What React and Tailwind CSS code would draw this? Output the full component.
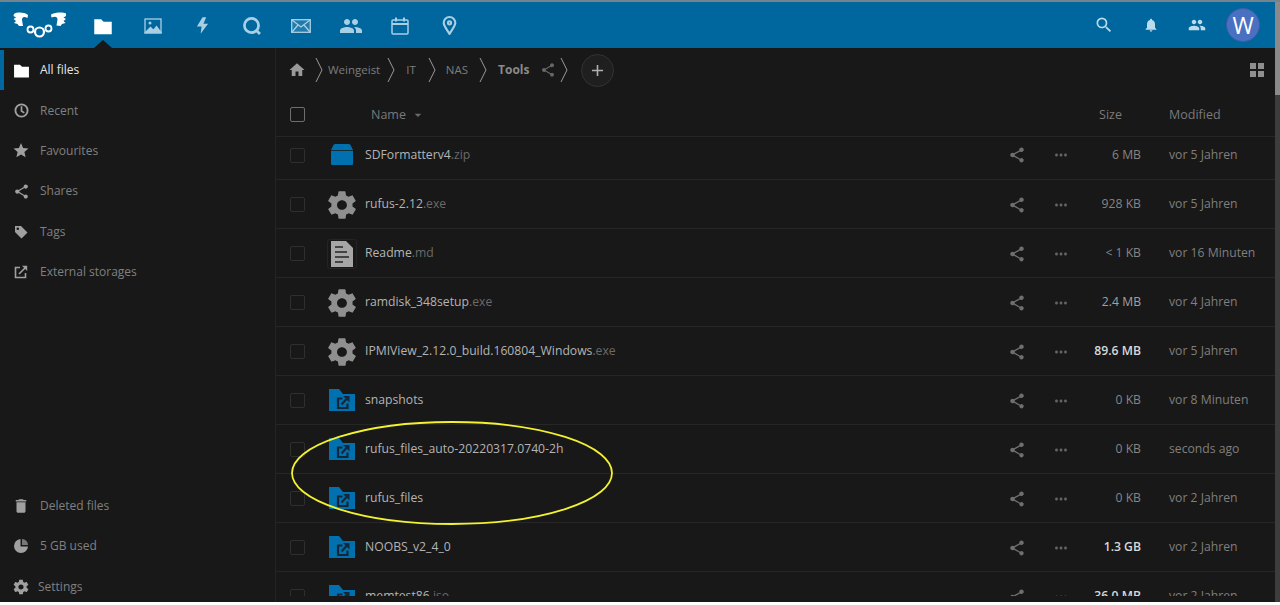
import React from "react";
import {
  MdHome,
  MdShare,
  MdMoreHoriz,
  MdStar,
  MdDelete,
  MdSearch,
  MdNotifications,
  MdAdd,
  MdArrowDropDown,
  MdPeople,
} from "react-icons/md";
import { IoMdSettings } from "react-icons/io";

const Folder = ({ className }) => (
  <svg viewBox="0 0 16 16" className={className} fill="currentColor">
    <path d="M1 2.500h5.500L8.500 4.500H15v10H1z" />
  </svg>
);

const SharedFolder = () => (
  <svg viewBox="0 0 28 28" className="w-[28px] h-[28px]">
    <path d="M1 2h10l4 5h12v17H1z" fill="#0071ae" />
    <path d="M14.500 11.500H10V21H19.500V16.500" fill="none" stroke="#12283a" strokeWidth="2.200" />
    <path d="M13.500 17.500L18.500 12" fill="none" stroke="#12283a" strokeWidth="2.200" />
    <path d="M15 9h6.500v6.500z" fill="#12283a" />
  </svg>
);

const Zip = () => (
  <svg viewBox="0 0 28 28" className="w-[28px] h-[28px]">
    <path d="M5.500 4Q6 3 7.500 3h13q1.500 0 2 1L25 9H3z" fill="#0071ae" />
    <path d="M3 9.800h22v13.200q0 1-1 1H4q-1 0-1-1z" fill="#0071ae" />
  </svg>
);

const Gear = () => <IoMdSettings className="w-[34px] h-[34px] text-[#8f8f8f] shrink-0" />;

const Doc = () => (
  <div className="w-[30px] h-[30px] rounded-[3px] border border-[#242424] flex items-center justify-center shrink-0">
    <svg viewBox="0 0 22 26" className="w-[22px] h-[26px]">
      <path d="M0 0h15l7 7v19H0z" fill="#a6a6a6" />
      <path d="M4 6h8M4 11h12M4 16h14M4 21h8" stroke="#242424" strokeWidth="1.700" />
    </svg>
  </div>
);

const files = [
  { name: "SDFormatterv4", ext: ".zip", icon: <Zip />, size: "6 MB", mod: "vor 5 Jahren", first: true },
  { name: "rufus-2.12", ext: ".exe", icon: <Gear />, size: "928 KB", mod: "vor 5 Jahren" },
  { name: "Readme", ext: ".md", icon: <Doc />, size: "< 1 KB", mod: "vor 16 Minuten" },
  { name: "ramdisk_348setup", ext: ".exe", icon: <Gear />, size: "2.4 MB", mod: "vor 4 Jahren", mid: true },
  { name: "IPMIView_2.12.0_build.160804_Windows", ext: ".exe", icon: <Gear />, size: "89.6 MB", mod: "vor 5 Jahren", big: true },
  { name: "snapshots", ext: "", icon: <SharedFolder />, size: "0 KB", mod: "vor 8 Minuten" },
  { name: "rufus_files_auto-20220317.0740-2h", ext: "", icon: <SharedFolder />, size: "0 KB", mod: "seconds ago" },
  { name: "rufus_files", ext: "", icon: <SharedFolder />, size: "0 KB", mod: "vor 2 Jahren" },
  { name: "NOOBS_v2_4_0", ext: "", icon: <SharedFolder />, size: "1.3 GB", mod: "vor 2 Jahren", big: true },
  { name: "memtest86", ext: ".iso", icon: <SharedFolder />, size: "36.0 MB", mod: "vor 2 Jahren", big: true },
];

const Row = ({ f }) => (
  <div
    className={`flex items-center shrink-0 border-b border-[#262626] pl-[14px] ${
      f.first ? "h-[43px] pb-[6px]" : "h-[49px] pt-[1px]"
    }`}
  >
    <div className="w-[15px] h-[15px] rounded-[2px] border border-[#2f2f2f] shrink-0" />
    <div className="w-[30px] h-[30px] ml-[22px] flex items-center justify-center shrink-0">{f.icon}</div>
    <div className="ml-[8px] flex-1 text-[12.200px] text-[#b4b4b4] whitespace-nowrap">
      {f.name}
      <span className="text-[#6a6a6a]">{f.ext}</span>
    </div>
    <MdShare className="w-[18px] h-[18px] text-[#6f6f6f] shrink-0" />
    <MdMoreHoriz className="w-[18px] h-[18px] ml-[26px] text-[#636363] shrink-0" />
    <div
      className={`w-[71px] text-right text-[12.200px] ${
        f.big ? "text-[#d8d8d8] font-semibold" : f.mid ? "text-[#a0a0a0]" : "text-[#858585]"
      }`}
    >
      {f.size}
    </div>
    <div className="w-[106px] ml-[28px] text-[12.200px] text-[#7f7f7f] whitespace-nowrap">{f.mod}</div>
  </div>
);

const Crumb = () => (
  <svg viewBox="0 0 8 26" className="w-[8px] h-[26px] shrink-0" fill="none" stroke="#9a9a9a" strokeWidth="1">
    <path d="M1 1l6 12-6 12" />
  </svg>
);

const NavItem = ({ icon, label, active, className }) => (
  <div
    className={`h-[40.400px] shrink-0 flex items-center text-[12px] ${
      active ? "border-l-[4px] border-[#0068a0] text-[#e6e6e6]" : "border-l-[4px] border-transparent text-[#808080]"
    } ${className || ""}`}
  >
    <div className={`w-[18px] h-[18px] ml-[8px] flex items-center justify-center ${active ? "text-white" : "text-[#a0a0a0]"}`}>
      {icon}
    </div>
    <span className="ml-[10px]">{label}</span>
  </div>
);

const TopIcon = ({ children, active }) => (
  <div className={`w-[49.500px] h-full pt-[1px] flex items-center justify-center ${active ? "text-white" : "text-[#a9cfe4]"}`}>
    {children}
  </div>
);

const Logo = () => (
  <svg viewBox="0 0 56 28" className="w-[56px] h-[28px] ml-[12px] shrink-0" fill="none" stroke="white">
    <circle cx="18.500" cy="18.500" r="3" strokeWidth="1.800" />
    <circle cx="27.500" cy="21" r="4.500" strokeWidth="2.200" />
    <circle cx="36.500" cy="17.500" r="3" strokeWidth="1.800" />
    <path
      d="M2 3C5 1 12 1 16 4L15.500 7C12 5 10 6 10 9L11 15L7 15L5.500 13L2 12L4 10L1.500 8L4 6.500L1.500 5z"
      fill="white"
      stroke="none"
    />
    <path
      d="M54 2.500C51 1 44 1 39 3.500L39.500 6.500C43 5 45.500 5.500 45.500 8.500L44.500 14.500L48.500 15L50 13L53.500 12L51.500 10L54 8L51.500 6.500L54 5z"
      fill="white"
      stroke="none"
    />
  </svg>
);

const App = () => {
  return (
    <div
      className="relative w-[1280px] h-[605px] bg-white overflow-hidden"
      style={{ fontFamily: '"Open Sans", "Noto Sans", sans-serif' }}
    >
      <div className="h-[2px] bg-[#75838d]" />
      <div className="flex flex-col h-[600px] w-[1275px] bg-[#181818]">
        <header className="relative h-[46px] bg-[#00679e] flex items-center shrink-0">
          <Logo />
          <div className="ml-[10.500px] flex h-full">
            <TopIcon active>
              <Folder className="w-[20px] h-[20px]" />
            </TopIcon>
            <TopIcon>
              <svg viewBox="0 0 18 18" className="w-[18px] h-[18px]" fill="none" stroke="currentColor" strokeWidth="1.300">
                <rect x="1" y="2" width="16" height="14" />
                <path d="M1.500 15.500l5-5 3 3 3-4 4.500 6z" fill="currentColor" />
                <circle cx="6" cy="6" r="1.500" fill="currentColor" stroke="none" />
              </svg>
            </TopIcon>
            <TopIcon>
              <svg viewBox="0 0 14 18" className="w-[13px] h-[17px]" fill="currentColor">
                <path d="M7 0L1 10h5l-1 8 8-11H8l3-7z" />
              </svg>
            </TopIcon>
            <TopIcon>
              <svg viewBox="0 0 18 18" className="w-[19px] h-[19px]" fill="none" stroke="currentColor" strokeWidth="2.600">
                <circle cx="9" cy="9" r="6.700" />
                <path d="M13 13l4 4" />
              </svg>
            </TopIcon>
            <TopIcon>
              <svg viewBox="0 0 20 14" className="w-[20px] h-[14px]" fill="none" stroke="currentColor" strokeWidth="1.300">
                <rect x="0.700" y="0.700" width="18.600" height="12.600" fill="currentColor" fillOpacity="0.200" />
                <path d="M1 1l9 7 9-7M1 13l6-7M19 13l-6-7" />
              </svg>
            </TopIcon>
            <TopIcon>
              <MdPeople className="w-[24px] h-[24px]" />
            </TopIcon>
            <TopIcon>
              <svg viewBox="0 0 18 18" className="w-[18px] h-[18px]" fill="none" stroke="currentColor" strokeWidth="1.500">
                <rect x="1" y="3" width="16" height="14" rx="1" />
                <path d="M1 7h16" strokeWidth="2" />
                <path d="M5 0.500v4M13 0.500v4" strokeWidth="2" />
              </svg>
            </TopIcon>
            <TopIcon>
              <svg viewBox="0 0 14 18" className="w-[15px] h-[19px]" fill="none" stroke="currentColor" strokeWidth="2">
                <path d="M7 17C4 12 1.500 9.500 1.500 6.500a5.500 5.500 0 0111 0C12.500 9.500 10 12 7 17z" />
                <circle cx="7" cy="6.500" r="1.500" />
              </svg>
            </TopIcon>
          </div>
          <div className="ml-auto flex items-center h-full text-[#bcdcee]">
            <MdSearch className="w-[20px] h-[20px]" />
            <MdNotifications className="w-[16px] h-[16px] ml-[29px]" />
            <MdPeople className="w-[18px] h-[18px] ml-[29px]" />
            <div className="w-[34px] h-[34px] ml-[20px] mr-[15px] rounded-full bg-[#4a70c2] border border-[#3c5da6] flex items-center justify-center text-white text-[23px]">
              W
            </div>
          </div>
          <div className="absolute left-[94px] bottom-0 w-0 h-0 border-x-[9px] border-x-transparent border-b-[8px] border-b-[#181818]" />
        </header>

        <div className="flex flex-1 min-h-0">
          <aside className="w-[276px] shrink-0 border-r border-[#242424] flex flex-col pt-[2px]">
            <NavItem active icon={<Folder className="w-[17px] h-[17px]" />} label="All files" />
            <NavItem
              icon={
                <svg viewBox="0 0 16 16" className="w-[15px] h-[15px]" fill="none" stroke="currentColor" strokeWidth="2">
                  <circle cx="8" cy="8" r="6.500" />
                  <path d="M8 3.500V8.500L11 10.500" strokeWidth="1.800" />
                </svg>
              }
              label="Recent"
            />
            <NavItem icon={<MdStar className="w-[19px] h-[19px]" />} label="Favourites" />
            <NavItem icon={<MdShare className="w-[17px] h-[17px]" />} label="Shares" />
            <NavItem
              icon={
                <svg viewBox="0 0 14 14" className="w-[14px] h-[14px]" fill="currentColor">
                  <path fillRule="evenodd" d="M1 1h6l6.500 6.500-6 6L1 7zM3.800 2.500a1.300 1.300 0 100 2.600 1.300 1.300 0 000-2.600z" />
                </svg>
              }
              label="Tags"
            />
            <NavItem
              icon={
                <svg viewBox="0 0 14 14" className="w-[14px] h-[14px]" fill="none" stroke="currentColor" strokeWidth="1.600">
                  <path d="M6 2.500H1.500v10h10V8" />
                  <path d="M5 9l6-6" />
                  <path d="M8 .800h5.200v5.200z" fill="currentColor" stroke="none" />
                </svg>
              }
              label="External storages"
            />
            <div className="mt-auto -mb-[5px]">
              <NavItem icon={<MdDelete className="w-[18px] h-[18px]" />} label="Deleted files" />
              <NavItem
                icon={
                  <svg viewBox="0 0 14 14" className="w-[14px] h-[14px]" fill="currentColor">
                    <path d="M6.500 0a7 7 0 107.500 7.500H6.500z" />
                    <path d="M8 0a6 6 0 016 6H8z" fillOpacity="0.700" />
                  </svg>
                }
                label="5 GB used"
              />
              <NavItem icon={<IoMdSettings className="w-[18px] h-[18px]" />} label="Settings" className="[&>span]:ml-[8px]" />
            </div>
          </aside>

          <main className="flex-1 min-w-0 flex flex-col pb-[6px]">
            <div className="h-[44px] shrink-0 flex items-center pl-[12px] text-[11.500px] text-[#7d7d7d]">
              <MdHome className="w-[18px] h-[18px] text-[#9a9a9a]" />
              <div className="ml-[9px]"><Crumb /></div>
              <span className="ml-[5px]">Weingeist</span>
              <div className="ml-[7px]"><Crumb /></div>
              <span className="ml-[11px]">IT</span>
              <div className="ml-[12px]"><Crumb /></div>
              <span className="ml-[10px]">NAS</span>
              <div className="ml-[11px]"><Crumb /></div>
              <span className="ml-[11px] font-bold text-[12px] text-[#8a8a8a]">Tools</span>
              <MdShare className="ml-[11px] w-[16px] h-[16px] text-[#666666]" />
              <div className="ml-[4px]"><Crumb /></div>
              <div className="ml-[13px] w-[33px] h-[33px] rounded-full bg-[#1f1f1f] border border-[#333333] flex items-center justify-center">
                <MdAdd className="w-[19px] h-[19px] text-[#b0b0b0]" />
              </div>
              <svg viewBox="0 0 14 14" className="ml-auto mr-[11px] w-[14px] h-[14px]" fill="#8f8f8f">
                <rect x="0" y="0" width="6" height="6" />
                <rect x="8" y="0" width="6" height="6" />
                <rect x="0" y="8" width="6" height="6" />
                <rect x="8" y="8" width="6" height="6" />
              </svg>
            </div>

            <div className="h-[45px] shrink-0 flex items-center border-b border-[#262626] pl-[14px] text-[12.500px] text-[#7a7a7a]">
              <div className="w-[15px] h-[15px] rounded-[2px] border border-[#6e6e6e] shrink-0" />
              <span className="ml-[66px] pt-[2px]">Name</span>
              <MdArrowDropDown className="ml-[4px] mt-[2px] w-[16px] h-[16px] text-[#6a6a6a]" />
              <span className="ml-auto pt-[2px]">Size</span>
              <span className="ml-[47px] w-[106px] pt-[2px]">Modified</span>
            </div>

            <div className="flex-1 min-h-0 overflow-hidden flex flex-col">
              {files.map((f) => (
                <Row key={f.name} f={f} />
              ))}
            </div>
          </main>
        </div>
      </div>

      <div className="absolute right-0 top-[2px] w-[5px] h-[93px] bg-[#8a8a8a]" />
      <div className="absolute right-0 top-[95px] w-[5px] h-[507px] bg-[#3d3d3d]" />

      <svg className="absolute left-[290px] top-[421px] w-[325px] h-[106px]" viewBox="0 0 325 106" fill="none">
        <ellipse cx="162" cy="52" rx="160" ry="51" stroke="#f2f230" strokeWidth="1.800" />
      </svg>
    </div>
  );
};

export default App;
